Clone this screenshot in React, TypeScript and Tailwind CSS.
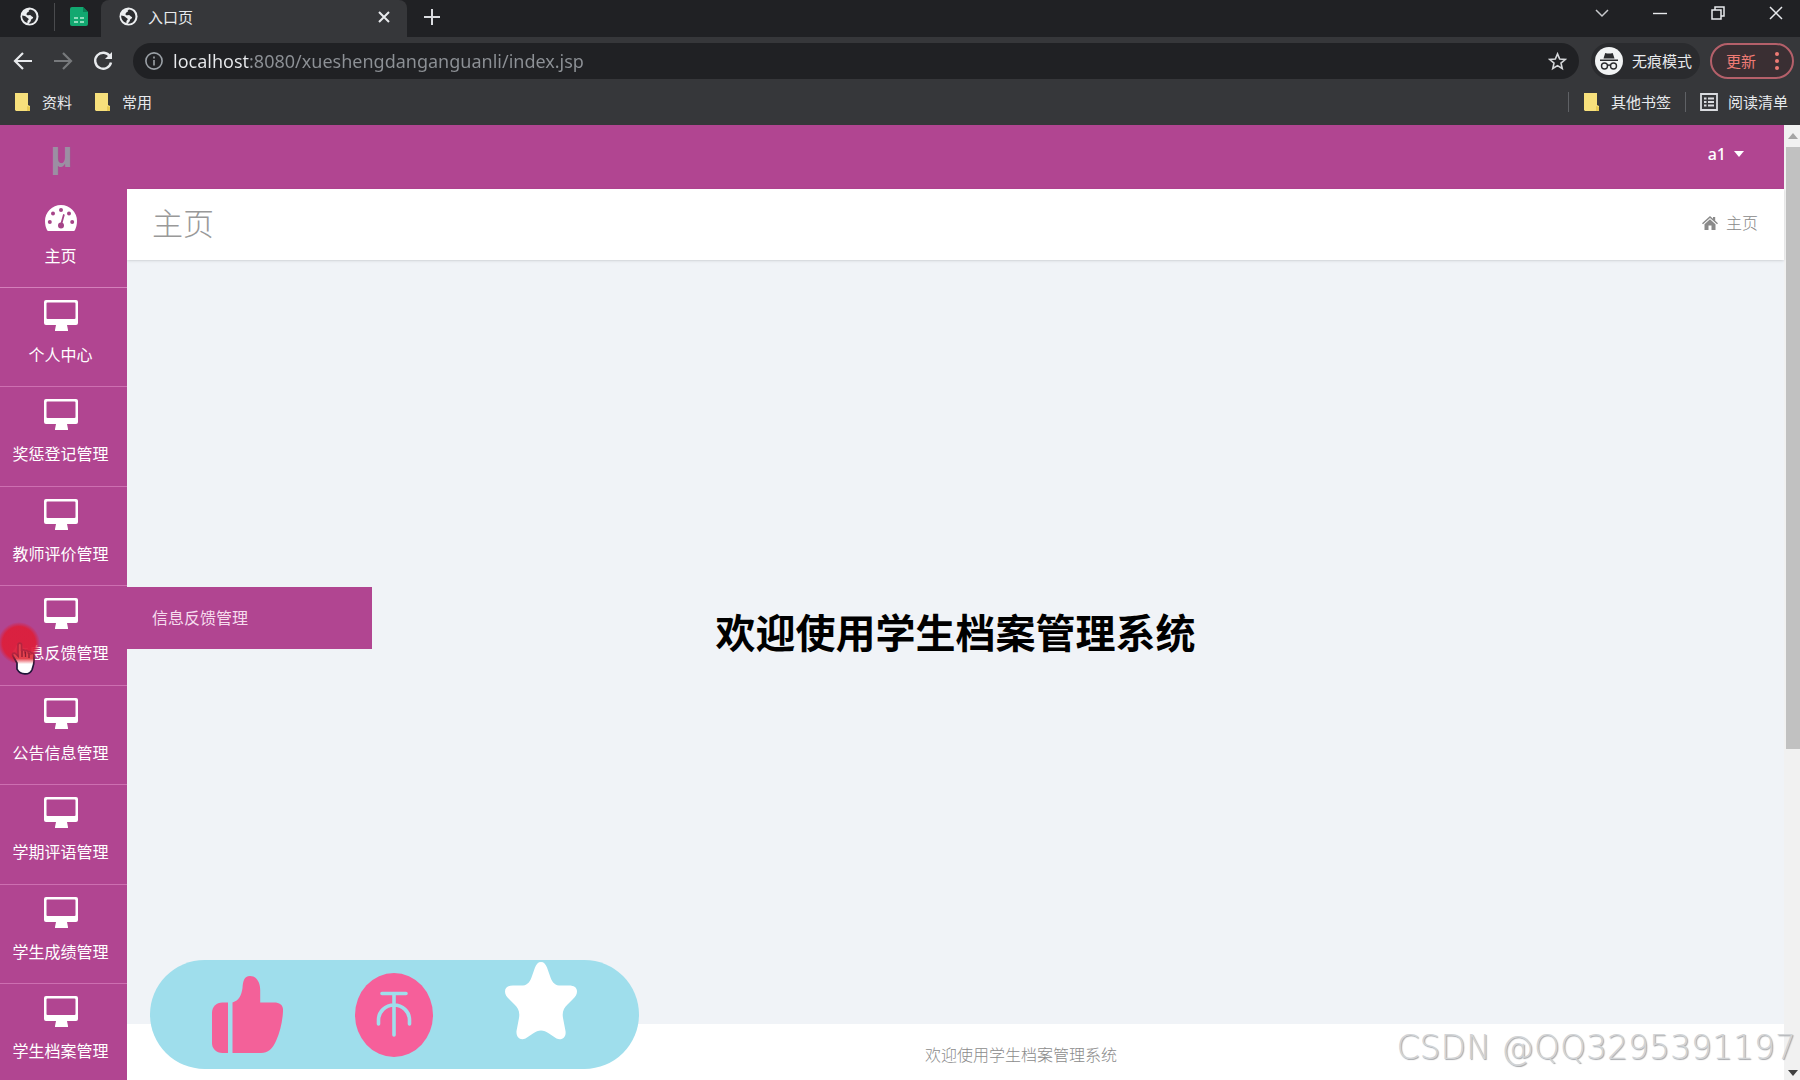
import React from "react";

const cjk = "font-['Noto_Sans','Noto_Sans_CJK_SC',sans-serif]";

function Globe() {
  return (
    <svg viewBox="0 0 20 20" className="size-[19px] shrink-0" aria-hidden="true">
      <circle cx="10" cy="10" r="9.5" fill="#eceef0" />
      <path d="M10.5 2.5c-1.5 1-1.8 1.6-1 2.6-1.6.3-2.8 1.3-2.6 3 .8.8 2.300.5 3.500.3 1.200 0 1.400 1.600 2.600 1.800 1.200.2 1 1.300.2 2-.8.700-1.700.9-1.800 2.200 0 .9-1.200 1.600-2.400 3 5 .8 8.200-3 8.300-7.200C17.300 5.800 14.500 2.800 10.500 2.500z" fill="#2b2c2f" />
      <path d="M2.300 9c1.800.2 3.800.6 4.600 1.800.8 1 2.400 1 2.300 2.200-.1 1-1.400 1.200-1.400 2.200v1.600C4.500 16 2.100 13 2.300 9z" fill="#2b2c2f" />
    </svg>
  );
}

function SheetIcon() {
  return (
    <svg viewBox="0 0 18 19" className="h-[19px] w-[18px]" aria-hidden="true">
      <path d="M2 0h11l5 5v12a2 2 0 0 1-2 2H2a2 2 0 0 1-2-2V2a2 2 0 0 1 2-2z" fill="#12a870" />
      <path d="M13 0l5 5h-5z" fill="#0b7f55" />
      <path d="M4 10h4v2H4zM10 10h4v2h-4zM4 14h4v2H4zM10 14h4v2h-4z" fill="#8fdcbc" />
    </svg>
  );
}

function Folder() {
  return (
    <svg viewBox="0 0 16 18" className="h-[18px] w-4 shrink-0" aria-hidden="true">
      <path d="M1 0h13v12l2 1v5H2l-1-1z" fill="#f7e07c" />
      <path d="M13 13l3 1v4h-3z" fill="#e9cb55" />
    </svg>
  );
}

function Desktop() {
  return (
    <svg viewBox="0 0 34 31" className="h-[31px] w-[34px]" aria-hidden="true">
      <path
        fillRule="evenodd"
        d="M2 0h30a2 2 0 0 1 2 2v21a2 2 0 0 1-2 2h-9l1 5v1H11v-1l1-5H2a2 2 0 0 1-2-2V2a2 2 0 0 1 2-2zM3.500 2.500a1 1 0 0 0-1 1V18a1 1 0 0 0 1 1h27a1 1 0 0 0 1-1V3.500a1 1 0 0 0-1-1z"
        fill="#fff"
      />
    </svg>
  );
}

function Gauge() {
  return (
    <svg viewBox="0 0 32 26" className="h-[26px] w-8" aria-hidden="true">
      <path d="M16 0a16 16 0 0 1 16 16c0 3.500-.8 6.500-2 9-.3.700-.7 1-1.300 1H3.300C2.700 26 2.300 25.700 2 25c-1.200-2.500-2-5.500-2-9A16 16 0 0 1 16 0z" fill="#fff" />
      <g fill="#a54488">
        <circle cx="16" cy="5" r="2" />
        <circle cx="8" cy="8.500" r="2" />
        <circle cx="24" cy="8.500" r="2" />
        <circle cx="4.800" cy="17" r="2" />
        <circle cx="27.200" cy="17" r="2" />
        <circle cx="16" cy="20.500" r="3" />
      </g>
      <path d="M16 20L18.800 10" stroke="#a54488" strokeWidth="1.800" strokeLinecap="round" />
    </svg>
  );
}

function Pointer() {
  return (
    <div className="pointer-events-none absolute top-[36px] left-0 h-[54px] w-[42px]" aria-hidden="true">
      <svg viewBox="0 0 42 54" className="h-[54px] w-[42px]">
        <defs>
          <linearGradient id="hand" x1="0" y1="0" x2="0" y2="1">
            <stop offset="0.500" stopColor="#e5414d" />
            <stop offset="0.680" stopColor="#fff" />
          </linearGradient>
          <linearGradient id="outline" x1="0" y1="0" x2="0" y2="1">
            <stop offset="0.350" stopColor="#b5243f" />
            <stop offset="0.700" stopColor="#1f1638" />
          </linearGradient>
          <radialGradient id="press">
            <stop offset="0.780" stopColor="#dc1f3c" stopOpacity="0.950" />
            <stop offset="1" stopColor="#dc1f3c" stopOpacity="0" />
          </radialGradient>
        </defs>
        <circle cx="19" cy="21" r="21" fill="url(#press)" />
        <path
          d="M17 41l-4-7c-1.500-2.500 1-4 3-2l2 2V23c0-2.600 3.600-2.600 3.600 0v6c.4-1.600 3.200-1.400 3.400.4.700-1.300 3-.9 3.200.8.900-1 3-.4 3 1.400 1.200-.9 2.800 0 2.800 1.600v6c0 3-1 5-2 8.500-2 5-11 6.500-15-.5z"
          fill="url(#hand)"
          stroke="url(#outline)"
          strokeWidth="1.700"
        />
        <path d="M22 29v6M25.500 30v5M29 31v5" stroke="#8b1c33" strokeWidth="1.300" />
      </svg>
    </div>
  );
}

const items = [
  "个人中心",
  "奖惩登记管理",
  "教师评价管理",
  "信息反馈管理",
  "公告信息管理",
  "学期评语管理",
  "学生成绩管理",
  "学生档案管理",
];

function TabStrip() {
  return (
    <div className="flex h-[37px] items-stretch bg-[#202124] text-[#e8eaed]">
      <div className="flex w-[101px] items-center pb-1 pl-5">
        <button aria-label="标签页 1"><Globe /></button>
        <span className="ml-[15px] h-7 w-px bg-[#4a4b4e]" />
        <button className="ml-[15px]" aria-label="标签页 2"><SheetIcon /></button>
      </div>
      <div className="flex w-[306px] items-center rounded-t-lg bg-[#36373a] pr-4 pb-1 pl-[18px]">
        <Globe />
        <span className="ml-2.5 flex-1 text-[15px] leading-5">入口页</span>
        <button aria-label="关闭标签页">
          <svg viewBox="0 0 14 14" className="size-[14px]" stroke="#e8eaed" strokeWidth="2"><path d="M2 2l10 10M12 2L2 12" /></svg>
        </button>
      </div>
      <button className="ml-[17px] pb-1" aria-label="新标签页">
        <svg viewBox="0 0 16 16" className="size-4" stroke="#dadce0" strokeWidth="2"><path d="M8 0v16M0 8h16" /></svg>
      </button>
      <div className="ml-auto flex items-center gap-11 pr-[17px] pb-[11px]">
        <button aria-label="搜索标签页">
          <svg viewBox="0 0 14 14" className="size-[14px]" fill="none" stroke="#c8cacd" strokeWidth="1.500"><path d="M1 4l6 6 6-6" /></svg>
        </button>
        <button aria-label="最小化">
          <svg viewBox="0 0 14 14" className="size-[14px]" stroke="#e8eaed" strokeWidth="1.400"><path d="M0 7.500h14" /></svg>
        </button>
        <button aria-label="还原">
          <svg viewBox="0 0 14 14" className="size-[14px]" fill="none" stroke="#e8eaed" strokeWidth="1.500"><path d="M1 4h9v9H1zM4 4V1h9v9h-3" /></svg>
        </button>
        <button aria-label="关闭">
          <svg viewBox="0 0 14 14" className="size-[14px]" stroke="#e8eaed" strokeWidth="1.500"><path d="M1 1l12 12M13 1L1 13" /></svg>
        </button>
      </div>
    </div>
  );
}

function Toolbar() {
  return (
    <div className="flex h-12 items-center pr-1.5 pl-3">
      <div className="flex gap-[18px]">
        <button aria-label="后退">
          <svg viewBox="0 0 22 22" className="size-[22px]" fill="none" stroke="#e8eaed" strokeWidth="2.200"><path d="M20 11H3M11 3l-8 8 8 8" /></svg>
        </button>
        <button aria-label="前进">
          <svg viewBox="0 0 22 22" className="size-[22px]" fill="none" stroke="#77797c" strokeWidth="2.200"><path d="M2 11h17M11 3l8 8-8 8" /></svg>
        </button>
        <button aria-label="重新加载">
          <svg viewBox="0 0 22 22" className="size-[22px]" fill="none" stroke="#e8eaed" strokeWidth="2.400"><path d="M18 6.500A8 8 0 1 0 19 12.500" /><path d="M20 2v7h-7z" fill="#e8eaed" stroke="none" /></svg>
        </button>
      </div>
      <div className="ml-[19px] flex h-9 flex-1 items-center rounded-full bg-[#202124] pr-3 pl-3">
        <svg viewBox="0 0 20 20" className="size-[18px] shrink-0" fill="none" stroke="#9aa0a6" strokeWidth="1.800" aria-hidden="true">
          <circle cx="10" cy="10" r="9" />
          <path d="M10 9v6M10 5v2.200" />
        </svg>
        <input
          aria-label="地址栏"
          defaultValue="localhost:8080/xueshengdanganguanli/index.jsp"
          className="ml-2.5 min-w-0 flex-1 bg-[linear-gradient(90deg,#e8eaed_76px,#8d9196_76px)] bg-clip-text text-lg leading-6 text-transparent outline-none"
        />
        <button aria-label="添加书签">
          <svg viewBox="0 0 20 20" className="size-[19px]" fill="none" stroke="#d5d7da" strokeWidth="1.700"><path d="M10 2l2.300 5.400 5.800.5-4.400 3.800 1.300 5.700-5-3-5 3 1.300-5.700L1.900 7.900l5.800-.5z" /></svg>
        </button>
      </div>
      <div className="ml-3 flex h-9 items-center rounded-full bg-[#2a2b2e] pr-2 pl-1 text-[15px] text-[#e8eaed]">
        <svg viewBox="0 0 28 28" className="size-7" aria-hidden="true">
          <circle cx="14" cy="14" r="14" fill="#f1f3f4" />
          <path d="M5 12.500h18v1.500H5zM8.500 11.500l1.700-5.500c2.500.8 5 .8 7.500 0l1.800 5.500z" fill="#2b2c2f" />
          <g fill="none" stroke="#2b2c2f" strokeWidth="1.400"><circle cx="9.500" cy="19" r="3" /><circle cx="18.500" cy="19" r="3" /><path d="M12.500 18.500q1.500-1 3 0" /></g>
        </svg>
        <span className="ml-[9px]">无痕模式</span>
      </div>
      <button className="ml-2.5 flex h-9 w-[84px] items-center justify-between rounded-full border-2 border-[#b5606a] bg-[#3a2f33] pr-[13px] pl-[14px] text-[15px] text-[#ee7b75]">
        更新
        <svg viewBox="0 0 4 18" className="h-[18px] w-1" fill="#ee7b75" aria-hidden="true"><circle cx="2" cy="2" r="2" /><circle cx="2" cy="9" r="2" /><circle cx="2" cy="16" r="2" /></svg>
      </button>
    </div>
  );
}

function Bookmarks() {
  return (
    <div className="flex h-10 items-center pr-3 pb-1.5 pl-[14px] text-[15px] leading-5 text-[#e8eaed]">
      <a href="#" className="flex items-center gap-3"><Folder />资料</a>
      <a href="#" className="ml-[22px] flex items-center gap-3"><Folder />常用</a>
      <span className="ml-auto h-5 w-px bg-[#5f6165]" />
      <a href="#" className="ml-[14px] flex items-center gap-3"><Folder />其他书签</a>
      <span className="ml-[14px] h-5 w-px bg-[#5f6165]" />
      <a href="#" className="ml-[14px] flex items-center gap-[10px]">
        <svg viewBox="0 0 18 18" className="size-[18px]" fill="none" stroke="#dadce0" strokeWidth="1.800" aria-hidden="true"><path d="M1 1h16v16H1zM4 5.500h2.500M4 9h2.500M4 12.500h2.500M8 5.500h6M8 9h6M8 12.500h6" /></svg>
        阅读清单
      </a>
    </div>
  );
}

function Sidebar() {
  return (
    <aside className="relative z-10 w-[127px] shrink-0 bg-[#b14591] text-white">
      <a href="#" className="flex h-16 items-center justify-center pr-1 pb-1 font-['Liberation_Sans',sans-serif] text-[36px] leading-none font-bold text-[#9b8fa3]">μ</a>
      <nav className="text-base leading-6">
        <a href="#" className="flex h-[99px] flex-col items-center border-b border-[#d47fbb] pt-4 pr-1.5">
          <Gauge />
          <span className="mt-[13px]">主页</span>
        </a>
        <ul>
          {items.map((label) => (
            <li key={label} className="relative odd:h-[99px] even:h-[100px]">
              <a href="#" className="flex h-full flex-col items-center border-b border-[#cd6fb1] pt-3 pr-1.5">
                <Desktop />
                <span className="mt-3 whitespace-nowrap">{label}</span>
              </a>
              {label === "信息反馈管理" && (
                <>
                  <a href="#" className="absolute top-px left-full flex h-[62px] w-[245px] items-center bg-[#b14591] pl-[25px] text-[#f6dcee]">
                    信息反馈管理
                  </a>
                  <Pointer />
                </>
              )}
            </li>
          ))}
        </ul>
      </nav>
    </aside>
  );
}

function Reactions() {
  return (
    <div className="absolute bottom-[11px] left-[150px] z-20 flex h-[109px] w-[489px] items-center gap-[72px] rounded-full bg-[#9fdeec] pl-[62px]">
      <button aria-label="点赞">
        <svg viewBox="0 0 71 77" className="h-[77px] w-[71px]" fill="#f36199">
          <path d="M16 26.500V77h-5.500C4 77 0 72.500 0 67V37c0-6 4-10.500 10.500-10.500z" />
          <path d="M20.500 77V26.500C27 24.500 29.500 19 30.500 12 31 5 32 0 38 0c6.500 0 10.200 6 10.200 14v12.500H62c6.500 0 9.500 3 9 9-.5 10-3 21-7 29.500C60.500 73 56 77 49 77z" />
        </svg>
      </button>
      <button aria-label="投币">
        <svg viewBox="0 0 78 84" className="h-[84px] w-[78px]" fill="none">
          <ellipse cx="39" cy="42" rx="39" ry="42" fill="#f65f9a" />
          <path d="M27 20.500h24M39 20.500V62M23.500 51V47a15.500 15 0 0 1 31 0v4" stroke="#9fdeec" strokeWidth="3.600" strokeLinecap="round" />
        </svg>
      </button>
      <button className="self-start pt-0.5" aria-label="收藏">
        <svg viewBox="0 0 72 78" className="h-[78px] w-[72px]" fill="#fff">
          <path d="M36 0c3 0 4.500 2 6 5.500l3 8.500c1.500 5 4 9 9 9.500h10c5 0 8 2 8 6 0 3-1.500 5-4 7.500l-5 5c-4.500 4-6 8-5 14l2.500 13c1 6-3.500 10-9 7.500L44 71.500c-5.500-4-10.500-4-16 0L20.500 76.500c-5.500 2.500-9.500-1.500-9-7.500L14 56c1-6-.5-10-5-14l-5-5c-2.500-2.500-4-4.500-4-7.500 0-4 3-6 8-6h10c5-.5 7.500-4.500 9-9.500l3-8.500C31.500 2 33 0 36 0z" />
        </svg>
      </button>
    </div>
  );
}

export default function App() {
  return (
    <div className={`${cjk} relative flex h-screen flex-col overflow-hidden bg-white`}>
      <header className="bg-[#36373a]">
        <TabStrip />
        <Toolbar />
        <Bookmarks />
      </header>

      <div className="flex min-h-0 flex-1">
        <Sidebar />
        <div className="flex min-w-0 flex-1 flex-col">
          <div className="flex h-16 shrink-0 justify-end bg-[#b14591] pt-[17px] pr-10">
            <button className="flex h-6 items-center gap-2 text-base leading-6 font-medium text-white">
              a1
              <svg viewBox="0 0 10 6" className="h-1.5 w-2.5" fill="#fff" aria-hidden="true"><path d="M0 0h10L5 6z" /></svg>
            </button>
          </div>
          <div className="z-[1] flex h-[71px] shrink-0 items-center justify-between bg-white pr-[26px] pb-[3px] pl-[25px] shadow-sm">
            <h1 className="text-[31px] leading-10 font-light text-[#999]">主页</h1>
            <a href="#" className="flex items-center gap-2 text-base leading-6 font-light text-[#888]">
              <svg viewBox="0 0 16 14" className="h-[14px] w-4" fill="#8a8a8a" aria-hidden="true"><path d="M8 0l3 2.700V1h2.200v3.700L16 7.200l-1 1L8 2 1 8.200l-1-1zM8 3.300l5.500 4.900V14h-4V9.500h-3V14h-4V8.200z" /></svg>
              主页
            </a>
          </div>
          <main className="flex flex-1 items-center justify-center bg-[#f0f3f7] pb-[18px]">
            <h2 className="text-[40px] leading-[60px] font-bold text-black">欢迎使用学生档案管理系统</h2>
          </main>
          <footer className="flex h-14 shrink-0 items-center justify-center bg-white pt-1.5 pl-[131px] text-base leading-6 font-light text-[#8b8b8b]">
            欢迎使用学生档案管理系统
          </footer>
        </div>

        <div className="flex w-4 shrink-0 flex-col items-end bg-[#f1f1f1]" aria-hidden="true">
          <div className="flex h-[22px] w-[14px] items-center justify-center">
            <svg viewBox="0 0 10 6" className="h-1.5 w-2.5" fill="#a5a5a5"><path d="M0 6h10L5 0z" /></svg>
          </div>
          <div className="h-[63%] w-[14px] bg-[#c1c1c1]" />
          <div className="mt-auto flex h-[10px] w-[14px] justify-center">
            <svg viewBox="0 0 10 6" className="h-1.5 w-2.5" fill="#404040"><path d="M0 0h10L5 6z" /></svg>
          </div>
        </div>
      </div>

      <Reactions />
      <p className="pointer-events-none absolute right-1 bottom-3 z-20 font-['DejaVu_Sans',sans-serif] text-[33px] leading-10 font-extralight whitespace-nowrap text-[#d2d4d6] [text-shadow:1px_1px_1px_#a3a5a8]">
        CSDN @QQ3295391197
      </p>
    </div>
  );
}
